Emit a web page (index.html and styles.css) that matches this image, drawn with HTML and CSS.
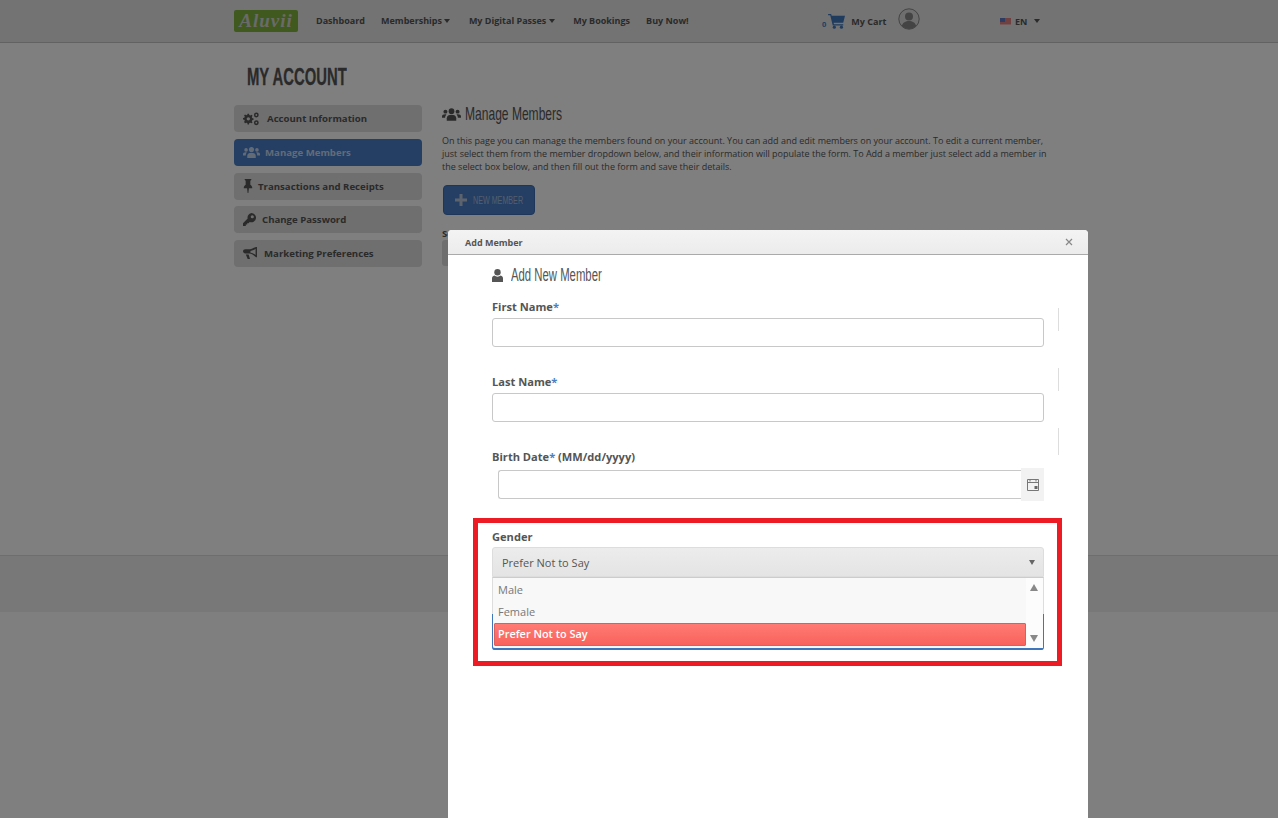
FILE: index.html
```html
<!DOCTYPE html>
<html lang="en">
<head>
<meta charset="utf-8">
<title>My Account</title>
<link rel="stylesheet" href="styles.css">
</head>
<body>
<div class="page">
  <header class="topbar">
    <div class="topbar-inner">
      <div class="logo">Aluvii</div>
      <nav class="nav">
        <span>Dashboard</span>
        <span class="has-caret">Memberships <i class="caret"></i></span>
        <span class="has-caret">My Digital Passes <i class="caret"></i></span>
        <span>My Bookings</span>
        <span>Buy Now!</span>
      </nav>
      <div class="cart">
        <span class="cart-count">0</span>
        <svg class="cart-icon" viewBox="0 0 20 18"><path d="M0 1h3.400l.6 2H19l-2 8H6.200l.4 1.600H17V14H5.200L2.400 2.500H0z"/><circle cx="7" cy="16" r="1.800"/><circle cx="15" cy="16" r="1.800"/></svg>
        <span>My Cart</span>
      </div>
      <svg class="avatar" viewBox="0 0 22 22"><circle cx="11" cy="11" r="10.200" fill="#ddd" stroke="#888"/><circle cx="11" cy="8.500" r="4" fill="#888"/><path d="M3.800 18c1-3.600 3.800-5 7.200-5s6.200 1.400 7.200 5c-2 2-4.500 3-7.200 3s-5.200-1-7.200-3z" fill="#888"/></svg>
      <div class="lang">
        <svg class="flag" viewBox="0 0 11 7"><rect width="11" height="7" fill="#e8b4b4"/><path d="M0 1h11M0 3h11M0 5h11" stroke="#d9534f" stroke-width="1"/><rect width="5" height="4" fill="#5b78c0"/></svg>
        <span>EN</span><i class="caret caret-lang"></i>
      </div>
    </div>
  </header>

  <main class="content">
    <h1 class="page-title"><span class="narrow narrow-title">MY ACCOUNT</span></h1>
    <div class="columns">
      <aside class="sidebar">
        <a class="side-item">
          <svg class="side-icon wide" viewBox="0 0 18 15"><path d="M6 1.500l1.500.1.400 1.500 1.200.5 1.300-.8 1.100 1.100-.8 1.300.5 1.200 1.500.4v1.600l-1.500.4-.5 1.200.8 1.300-1.100 1.100-1.300-.8-1.200.5-.4 1.500H6l-.4-1.500-1.200-.5-1.300.8L2 10.900l.8-1.300-.5-1.200L.8 8V6.400l1.500-.4.500-1.200L2 3.500l1.100-1.100 1.300.8 1.200-.5zM6.800 5.400a1.900 1.900 0 100 3.800 1.900 1.900 0 000-3.800z" transform="translate(-.8 0)"/><path fill-rule="evenodd" d="M15 .3a2.700 2.700 0 110 5.400 2.700 2.700 0 010-5.400zm0 1.700a1 1 0 100 2 1 1 0 000-2zM15 9a2.700 2.700 0 110 5.400A2.700 2.700 0 0115 9zm0 1.700a1 1 0 100 2 1 1 0 000-2z"/></svg>
          <span>Account Information</span>
        </a>
        <a class="side-item active">
          <svg class="side-icon users" viewBox="0 0 20 14"><use href="#users-shape"/></svg>
          <span>Manage Members</span>
        </a>
        <a class="side-item">
          <svg class="side-icon pin" viewBox="0 0 10 15"><path d="M1.500 0h7v1.200L7.500 2v4.200c1 .6 2 1.700 2 3V10H6l-.6 5h-.8L4 10H.5v-.8c0-1.300 1-2.400 2-3V2l-1-.8z"/></svg>
          <span>Transactions and Receipts</span>
        </a>
        <a class="side-item">
          <svg class="side-icon key" viewBox="0 0 14 14"><path fill-rule="evenodd" d="M9 0a5 5 0 11-1.700 9.700L6 11H4.500v1.500H3V14H0v-3l5-5A5 5 0 019 0zm1 2.300a1.700 1.700 0 100 3.400 1.700 1.700 0 000-3.400z"/></svg>
          <span>Change Password</span>
        </a>
        <a class="side-item">
          <svg class="side-icon horn" viewBox="0 0 15 14"><path fill-rule="evenodd" d="M14 0h1v11h-1l-3-2.500c-1.500-1-4-1.500-5-1.500H2.500C1 7 0 6 0 4.700S1 2.500 2.500 2.500H6c1.500 0 4-.5 5-1.500zM13.500 2c-1 1-3 2-5.500 2.400v1.800c2.500.4 4.500 1.400 5.500 2.400zM3 8h3l1.500 5H5z"/></svg>
          <span>Marketing Preferences</span>
        </a>
      </aside>
      <section class="main">
        <h2 class="section-title">
          <svg class="users-lg" viewBox="0 0 20 14"><defs><g id="users-shape"><circle cx="10" cy="4" r="3"/><path d="M5 14v-2.500C5 9 7 7.800 10 7.800s5 1.200 5 3.700V14z"/><circle cx="3.600" cy="4.500" r="2.100"/><circle cx="16.400" cy="4.500" r="2.100"/><path d="M0 11V9.500C0 8 1.200 7.200 3.300 7.200c.6 0 1 .1 1.400.2-.9.800-1.300 1.900-1.400 3.600zM20 11V9.500c0-1.500-1.200-2.300-3.300-2.300-.6 0-1 .1-1.400.2.900.8 1.300 1.900 1.400 3.600z"/></g></defs><use href="#users-shape"/></svg>
          <span class="narrow narrow-heading">Manage Members</span>
        </h2>
        <p class="intro">On this page you can manage the members found on your account. You can add and edit members on your account. To edit a current member, just select them from the member dropdown below, and their information will populate the form. To Add a member just select add a member in the select box below, and then fill out the form and save their details.</p>
        <button class="new-member" type="button">
          <svg class="plus" viewBox="0 0 12 12"><path d="M4.500 0h3v4.500H12v3H7.500V12h-3V7.500H0v-3h4.500z"/></svg>
          <span class="narrow narrow-button">NEW MEMBER</span>
        </button>
        <div class="select-label">Select</div>
        <div class="select-stub"></div>
      </section>
    </div>
  </main>
  <div class="footer-band"></div>
</div>

<div class="backdrop"></div>

<div class="modal">
  <div class="modal-head">
    <span>Add Member</span>
    <svg class="close" viewBox="0 0 8 8"><path d="M1 1l6 6M7 1L1 7"/></svg>
  </div>
  <div class="modal-body">
    <h3 class="form-title">
      <svg class="user-icon" viewBox="0 0 11 13"><circle cx="5.500" cy="3.300" r="3.200"/><path d="M0 13V9.500C0 7.800 1 7 2.300 6.600c.9.700 2 1.100 3.200 1.100s2.300-.4 3.200-1.100C10 7 11 7.800 11 9.500V13z"/></svg>
      <span class="narrow narrow-form">Add New Member</span>
    </h3>
    <div class="field">
      <label>First Name<em>*</em></label>
      <div class="input"></div>
      <i class="tick tick-first"></i>
    </div>
    <div class="field">
      <label>Last Name<em>*</em></label>
      <div class="input"></div>
      <i class="tick tick-last"></i>
    </div>
    <div class="field">
      <label>Birth Date<em>*</em> (MM/dd/yyyy)</label>
      <div class="date-row">
        <div class="input date-input"></div>
        <div class="addon">
          <svg class="cal" viewBox="0 0 12 12"><path d="M.5.500h11v11H.5zM.5 3.500h11M3 .5v2M9 .5v2" fill="none" stroke="#777"/><rect x="7.500" y="7" width="3" height="3" fill="#666"/></svg>
        </div>
      </div>
      <i class="tick tick-date"></i>
    </div>
    <div class="field gender">
      <label>Gender</label>
      <div class="combo">
        <span>Prefer Not to Say</span>
        <i class="combo-caret"></i>
      </div>
      <div class="listbox">
        <ul class="options">
          <li>Male</li>
          <li>Female</li>
          <li class="selected">Prefer Not to Say</li>
        </ul>
        <div class="scroll">
          <i class="arrow-up"></i>
          <i class="arrow-down"></i>
        </div>
      </div>
    </div>
  </div>
  <div class="highlight"></div>
</div>
</body>
</html>
```
FILE: styles.css
```css
* { box-sizing: border-box; }
html, body { margin: 0; height: 818px; overflow: hidden; }
body { background: #fff; font-family: "Open Sans", "Liberation Sans", sans-serif; color: #555; }
.page { height: 818px; background: #fff; }

.narrow { display: inline-block; white-space: nowrap; transform-origin: left center; font-family: "Liberation Sans", sans-serif; }
.narrow-title { transform: scaleX(.645); -webkit-text-stroke: .3px #555; }
.narrow-heading { transform: scaleX(.634); }
.narrow-form { transform: scaleX(.63); }
.narrow-button { transform: scaleX(.65); }

.topbar { height: 43px; background: #e6e6e6; border-bottom: 1px solid #c4c4c4; }
.topbar-inner { display: flex; align-items: center; height: 42px; padding-left: 234px; }
.logo { width: 64px; height: 22px; margin-top: -1px; background: #80b33c; border-radius: 2px; color: #d4d4d4; font: italic 700 19px/22px "Liberation Serif", serif; text-align: center; letter-spacing: 1px; }
.nav { display: flex; gap: 16px; margin-left: 18px; margin-top: -1px; font-size: 9px; font-weight: 700; width: 476px; }
.has-caret { padding-right: 2.500px; }
.caret { display: inline-block; border: 3px solid transparent; border-top: 4px solid #555; border-bottom: 0; vertical-align: 1px; }
.cart { display: flex; align-items: center; font-size: 9px; font-weight: 700; width: 76px; margin-left: 30px; }
.cart-count { color: #4a7fc1; font-size: 7.500px; margin-top: 5px; }
.cart-icon { width: 18px; height: 16px; margin: 0 5px 0 2px; fill: #3f76bb; }
.avatar { width: 22px; height: 22px; margin-top: -4px; }
.lang { display: flex; align-items: center; margin-left: 80px; font-size: 9px; font-weight: 700; }
.flag { width: 11px; height: 7px; margin-right: 4px; }
.caret-lang { margin-left: 7px; vertical-align: 0; }

.content { height: 512px; padding: 21px 0 0 234px; }
.page-title { margin: 0 0 15px 13px; font: 700 23px/26px "Liberation Sans", sans-serif; color: #555; }
.columns { display: flex; gap: 20px; }
.sidebar { width: 188px; display: flex; flex-direction: column; gap: 6.800px; }
.side-item { display: flex; align-items: center; height: 27px; padding-left: 9px; border-radius: 4px; background: #dedede; font-size: 9.650px; font-weight: 700; color: #555; }
.side-item.active { background: #4a7ec8; color: #c7d7ef; }
.side-icon { fill: #555; margin-right: 6px; }
.active .side-icon { fill: #c7d7ef; }
.side-icon.wide { width: 16px; height: 14px; margin-right: 8px; }
.side-icon.users { width: 17px; height: 12px; margin-right: 5px; }
.side-icon.pin { width: 10px; height: 14px; margin-right: 5px; }
.side-icon.key { width: 13px; height: 13px; margin-right: 6px; }
.side-icon.horn { width: 14px; height: 13px; margin-right: 7px; }
.main { width: 606px; }
.section-title { display: flex; align-items: center; margin: -1px 0 10px; font: 400 19px/20px "Liberation Sans", sans-serif; color: #555; }
.users-lg { width: 19px; height: 14px; fill: #555; margin-right: 4px; }
.intro { margin: 0 0 12px; font-size: 9px; line-height: 13px; color: #555; width: 606px; }
.new-member { display: flex; align-items: center; width: 92px; height: 30px; margin-left: 1px; padding: 0 0 0 11px; border: 1px solid #3c6db0; border-radius: 4px; background: #4a7ec8; color: #a9bdd8; font: 400 11px "Liberation Sans", sans-serif; overflow: hidden; }
.plus { width: 12px; height: 12px; flex: none; fill: #b9c6da; margin-right: 6px; }
.select-label { margin-top: 12px; font-size: 9.500px; font-weight: 700; line-height: 13px; }
.select-stub { width: 90px; height: 26px; background: #ddd; border-radius: 3px; }
.footer-band { height: 57px; background: #f0f0f0; border-top: 1px solid #dcdcdc; }

.backdrop { position: fixed; inset: 0; background: rgba(0, 0, 0, .5); }

.modal { position: absolute; left: 448px; top: 230px; width: 640px; height: 588px; background: #fff; border-radius: 4px 4px 0 0; }
.modal-head { display: flex; align-items: center; justify-content: space-between; height: 25px; padding: 0 15px 0 17px; background: linear-gradient(#f3f3f3, #ececec); border-bottom: 1px solid #aaa; border-radius: 4px 4px 0 0; font-size: 9px; font-weight: 700; color: #555; }
.close { width: 8px; height: 8px; fill: none; stroke: #888; stroke-width: 1.200; }
.modal-body { padding: 8px 44px 0; }
.form-title { display: flex; align-items: center; height: 24px; margin: 0 0 12px; font: 400 18px/24px "Liberation Sans", sans-serif; color: #555; }
.user-icon { width: 11px; height: 13px; flex: none; fill: #555; margin-right: 8px; }

.field { position: relative; height: 75px; }
label { display: block; height: 19px; font-size: 11.100px; font-weight: 700; line-height: 16px; color: #555; }
label em { color: #4a7fc1; font-style: normal; }
.input { height: 29px; border: 1px solid #c8c8c8; border-radius: 3px; background: #fff; }
.tick { position: absolute; left: 566px; width: 1px; height: 23px; background: #ddd; }
.tick-first { top: 9px; }
.tick-last { top: -6px; }
.tick-date { top: -21px; height: 27px; }
.date-row { display: flex; align-items: center; padding-left: 6px; }
.date-input { width: 523px; border-radius: 3px 0 0 3px; border-right: 0; }
.addon { display: flex; align-items: center; justify-content: center; width: 23px; height: 33px; background: #f2f2f2; }
.cal { width: 12px; height: 12px; }

.gender { height: auto; margin-top: 5px; }
.gender label { height: 18px; }
.combo { display: flex; align-items: center; justify-content: space-between; height: 30px; padding: 0 8px 0 9px; border: 1px solid #ddd; border-radius: 3px 3px 0 0; background: linear-gradient(#ececec, #e4e4e4); font-size: 11px; color: #555; }
.combo-caret { border: 3.500px solid transparent; border-top: 5px solid #666; border-bottom: 0; }
.listbox { position: relative; display: flex; height: 73px; border: 1px solid #ddd; border-top-color: #ccc; border-bottom: 2px solid #3f76bb; border-radius: 0 0 3px 3px; background: #f8f8f8; }
.listbox::before { content: ""; position: absolute; left: -1px; right: -1px; top: 36px; bottom: -2px; border: 1px solid #3f76bb; border-top: 0; border-bottom: 2px solid #3f76bb; border-radius: 0 0 3px 3px; }
.options { list-style: none; flex: 1; margin: 0; padding: 1px 0 0 1px; font-size: 11px; color: #777; background: #f8f8f8; }
.options li { height: 22px; line-height: 22px; padding-left: 4px; }
.options .selected { position: relative; height: 23px; color: #fff; font-size: 10.900px; font-weight: 600; background: linear-gradient(#ff7b74, #f9625c); border: 1px solid #d9605a; border-radius: 1px; padding-left: 3px; line-height: 20px; }
.scroll { position: relative; display: flex; flex-direction: column; align-items: center; justify-content: space-between; width: 17px; padding: 6px 2px 6px 0; background: #fcfcfc; }
.arrow-up { border: 4.500px solid transparent; border-bottom: 7px solid #888; border-top: 0; }
.arrow-down { border: 4.500px solid transparent; border-top: 7px solid #888; border-bottom: 0; }

.highlight { position: absolute; left: 25px; top: 288px; width: 589px; height: 148px; border: 5px solid #ed1c24; pointer-events: none; }
```
